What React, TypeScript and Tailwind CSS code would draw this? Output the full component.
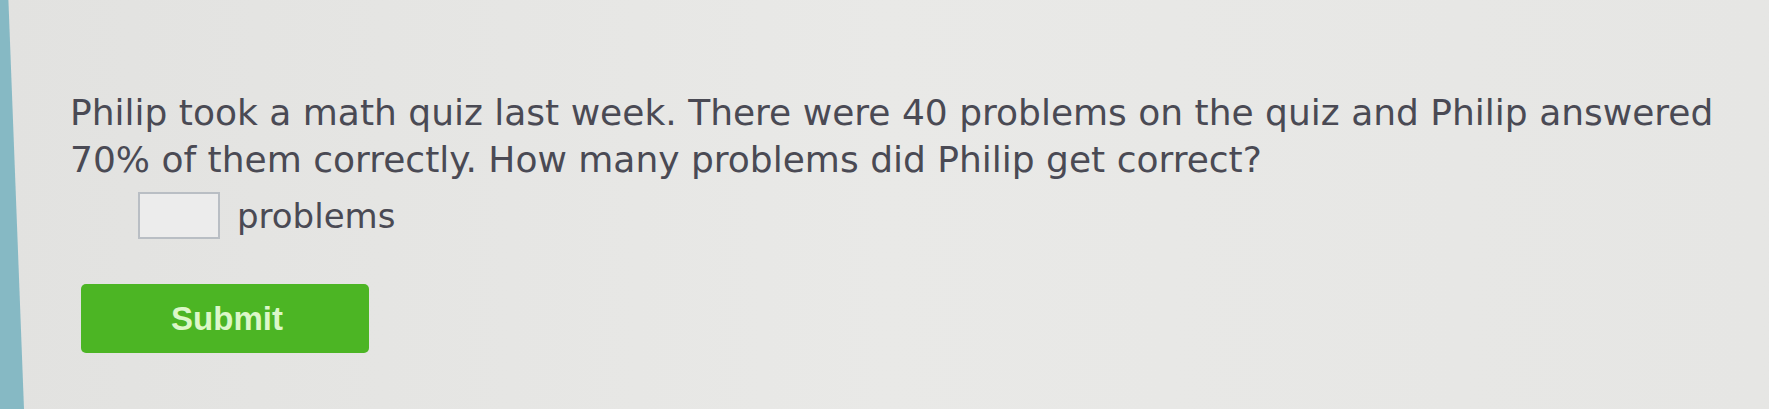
export default function App() {
  return (
    <div className="flex h-[409px] w-full overflow-hidden bg-gradient-to-r from-[#e2e2e0] via-[#e9e9e7] to-[#e6e6e4]">
      {/* bezel edge on the left */}
      <div className="w-[24px] shrink-0 bg-[#86b9c4] [clip-path:polygon(0_0,35%_0,100%_100%,0_100%)]" />
      <div className="flex flex-1 flex-col pl-[46px] pt-[89px] font-['DejaVu_Sans',sans-serif] text-[#4a4a54]">
        <p className="max-w-[1660px] text-[36px] leading-[47px]">
          Philip took a math quiz last week. There were 40 problems on the quiz and Philip answered 70% of them correctly. How many problems did Philip get correct?
        </p>
        <div className="mt-[9px] flex items-center gap-[17px] pl-[68px]">
          <div className="h-[47px] w-[82px] border-2 border-[#b9bec4] bg-[#ececec]" />
          <span className="text-[34px] leading-none">problems</span>
        </div>
        <button className="ml-[11px] mt-[45px] flex h-[69px] w-[288px] items-center justify-center rounded-[5px] bg-[#4cb524] pl-[4px] font-['Liberation_Sans',sans-serif] text-[33px] font-bold text-[#dcf7c8]">
          Submit
        </button>
      </div>
    </div>
  );
}
